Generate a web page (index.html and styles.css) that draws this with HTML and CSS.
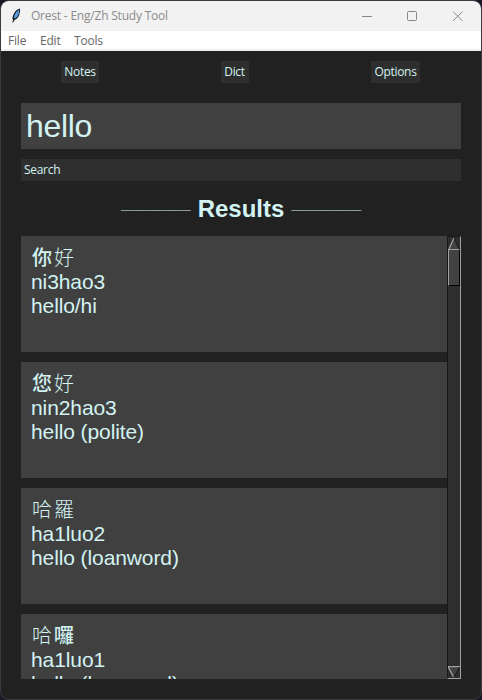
FILE: index.html
```html
<!DOCTYPE html>
<html lang="en">
<head>
<meta charset="utf-8">
<title>Orest - Eng/Zh Study Tool</title>
<link rel="stylesheet" href="styles.css">
</head>
<body>
<div class="window">
  <header class="titlebar">
    <svg class="feather" width="16" height="18" viewBox="0 0 16 18"><path d="M4.5 16 5 13Q3.8 11 5.2 8 7.5 2.2 12 1.5 12.7 5 10.3 10 8.5 13 6 13.3Z" fill="#1c2430"/><path d="M6 11.5Q5.7 8 8.2 5.2L11.2 2.6Q11.6 6 9.3 9.5Q7.8 12 6 11.5Z" fill="#5b9be0"/><path d="M4.8 15.5 7 11" fill="none" stroke="#10151d" stroke-width=".8"/></svg>
    <span class="title">Orest - Eng/Zh Study Tool</span>
    <svg class="controls" width="104" height="12" viewBox="0 0 104 12" fill="none" stroke="#888"><path d="M0 6.5H10"/><rect x="45.5" y="1.5" width="9" height="9" rx="1"/><path d="M91 1.5 100.5 11M100.5 1.5 91 11"/></svg>
  </header>
  <nav class="menubar"><span class="file">File</span><span class="edit">Edit</span><span class="tools">Tools</span></nav>
  <main>
    <div class="tabs">
      <div><button class="notes">Notes</button></div>
      <div><button class="dict">Dict</button></div>
      <div><button class="options">Options</button></div>
    </div>
    <div class="entry">hello</div>
    <button class="search"><span>Search</span></button>
    <h1><span class="rule">─────</span><span>Results</span><span class="rule">─────</span></h1>
    <div class="results">
      <div class="list">
        <article><p class="zh"><b>你</b>好</p><p>ni3hao3</p><p>hello/hi</p></article>
        <article><p class="zh"><b>您</b>好</p><p>nin2hao3</p><p>hello (polite)</p></article>
        <article><p class="zh">哈羅</p><p>ha1luo2</p><p>hello (loanword)</p></article>
        <article><p class="zh">哈<b>囉</b></p><p>ha1luo1</p><p>hello (loanword)</p></article>
      </div>
      <div class="scrollbar">
        <svg width="12" height="12" viewBox="0 0 12 12"><path d="M6 0 11 12H1Z" fill="#424242"/><path d="M1 12 6 1" fill="none" stroke="#a0a0a0" stroke-width="1.3"/><path d="M6 1 11 12" fill="none" stroke="#171717"/></svg>
        <div class="thumb"></div>
        <svg class="down" width="12" height="12" viewBox="0 0 12 12"><path d="M0 .5H12L6 11Z" fill="#424242"/><path d="M12 .5H0L5.5 11" fill="none" stroke="#a0a0a0" stroke-width="1.3"/><path d="M6 11 11.5 1" fill="none" stroke="#171717"/></svg>
      </div>
    </div>
  </main>
</div>
</body>
</html>
```
FILE: styles.css
```css
* { box-sizing: border-box; }
body { margin: 0; background: #1b1726; overflow: hidden; }
.window {
  width: 482px; height: 700px;
  border: 1px solid #3c3b43;
  border-radius: 9px;
  overflow: hidden;
  background: #212121;
  color: #d3f3f2;
  font: 12px/16px "Open Sans", "Noto Sans", sans-serif;
}
.titlebar {
  display: flex; align-items: center;
  height: 30px; padding: 0 17px 0 7px;
  background: #f2f2f2; color: #8c8c8c;
}
.feather { margin-right: 7px; }
.title { flex: 1; letter-spacing: -.21px; }
.controls { width: 104px; margin-right: -2px; }
.menubar {
  display: flex; align-items: center;
  height: 20px; padding: 2px 7px 0;
  background: #fff; color: #666;
  border-bottom: 2px solid #f0f0f0;
}
.menubar span { letter-spacing: -.2px; }
.file { width: 32px; }
.edit { width: 34px; }
main { padding: 10px 20px 0; }
button {
  display: block; height: 22px; padding: 0 0 1px; border: 0;
  background: #2e2e2e; color: inherit;
  font: 12px/16px "Open Sans", "Noto Sans", sans-serif;
  letter-spacing: -.3px; white-space: nowrap;
}
.tabs { display: flex; justify-content: space-between; padding: 0 41px 0 40px; }
.notes { width: 38px; }
.dict { width: 28px; margin-right: 1px; }
.options { width: 49px; }
.entry {
  height: 46px; margin-top: 20px; padding-left: 5px;
  background: #404040;
  font: 32px/46px "Liberation Sans", sans-serif;
  letter-spacing: -.3px;
}
.search { width: 100%; margin-top: 10px; padding-left: 3px; text-align: left; }
h1 {
  display: flex; justify-content: center; gap: 7px;
  height: 28px; margin: 14px 0 13px;
  font: bold 24px/28px "Liberation Sans", sans-serif;
}
.rule { font: 400 14px/28px "Noto Sans CJK TC", sans-serif; }
.results { display: flex; height: 443px; }
.list { width: 426px; overflow: hidden; }
article {
  height: 116px; margin-bottom: 10px; padding: 10px;
  background: #404040;
  font: 21px/24px "Liberation Sans", "Noto Sans CJK TC", sans-serif;
  letter-spacing: -.1px;
}
p { height: 24px; margin: 0; white-space: nowrap; }
.zh { padding-left: 1px; font: 300 20px/21px "Noto Sans CJK TC", sans-serif; letter-spacing: 2px; }
.zh b { font-weight: 500; }
.scrollbar {
  display: flex; flex-direction: column;
  width: 14px; background: #2e2e2e;
  border: 1px solid #171717; border-right-color: #a0a0a0; border-bottom-color: #a0a0a0;
}
.thumb {
  height: 37px; background: #424242;
  border: 1px solid #a0a0a0; border-right-color: #000; border-bottom-color: #000;
}
.down { margin-top: auto; }
```
